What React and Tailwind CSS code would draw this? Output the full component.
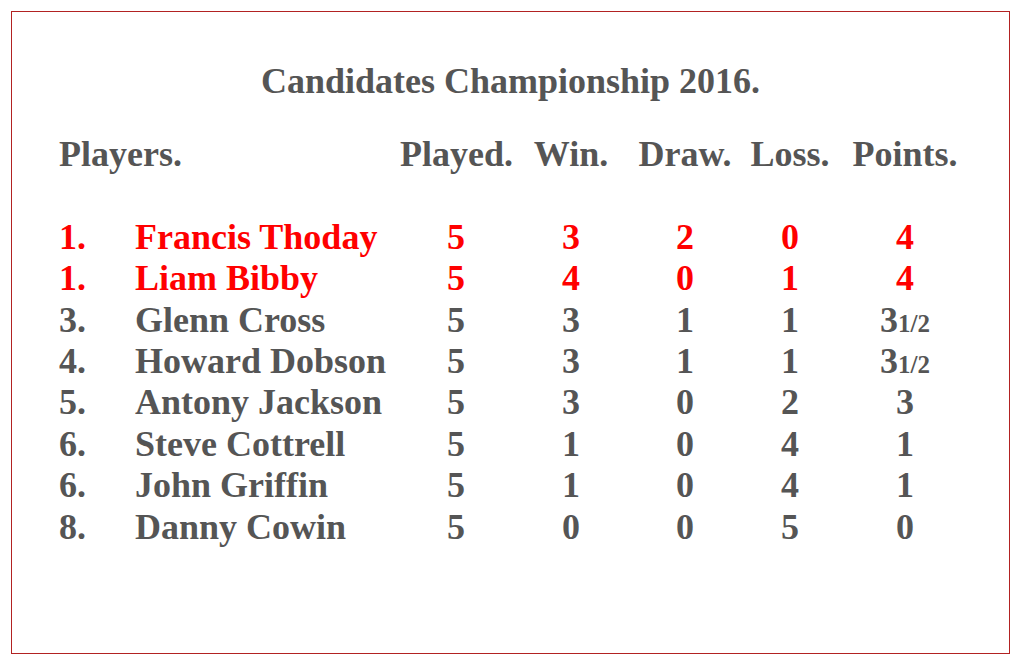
import React from "react";

const players = [
  { rank: "1.", name: "Francis Thoday", played: "5", win: "3", draw: "2", loss: "0", points: "4", lead: true },
  { rank: "1.", name: "Liam Bibby", played: "5", win: "4", draw: "0", loss: "1", points: "4", lead: true },
  { rank: "3.", name: "Glenn Cross", played: "5", win: "3", draw: "1", loss: "1", points: "3", half: true },
  { rank: "4.", name: "Howard Dobson", played: "5", win: "3", draw: "1", loss: "1", points: "3", half: true },
  { rank: "5.", name: "Antony Jackson", played: "5", win: "3", draw: "0", loss: "2", points: "3" },
  { rank: "6.", name: "Steve Cottrell", played: "5", win: "1", draw: "0", loss: "4", points: "1" },
  { rank: "6.", name: "John Griffin", played: "5", win: "1", draw: "0", loss: "4", points: "1" },
  { rank: "8.", name: "Danny Cowin", played: "5", win: "0", draw: "0", loss: "5", points: "0" },
];

const grid = "grid grid-cols-[76px_265px_112px_118px_110px_100px_130px]";

export default function App() {
  return (
    <div className="w-[1024px] h-[667px] bg-white pt-[11px] pl-[11px] font-[family-name:'Liberation_Serif','Times_New_Roman',serif] font-bold">
      <div className="w-[999px] h-[643px] border border-[#b22222] pl-[47px] text-[#555555]">
        {/* title */}
        <h1 className="pt-[49px] pr-[47px] text-center text-[36px] leading-[41.4px]">
          Candidates Championship 2016.
        </h1>

        {/* headers */}
        <div className={`${grid} mt-[32px] text-[36px] leading-[41.4px]`}>
          <div className="col-span-2">Players.</div>
          <div className="text-center">Played.</div>
          <div className="text-center">Win.</div>
          <div className="text-center">Draw.</div>
          <div className="text-center">Loss.</div>
          <div className="text-center">Points.</div>
        </div>

        {/* table rows */}
        <div className="mt-[41px] text-[36px] leading-[41.4px]">
          {players.map((p, i) => (
            <div key={i} className={`${grid} ${p.lead ? "text-[#ff0000]" : ""}`}>
              <div>{p.rank}</div>
              <div className="whitespace-nowrap">{p.name}</div>
              <div className="text-center">{p.played}</div>
              <div className="text-center">{p.win}</div>
              <div className="text-center">{p.draw}</div>
              <div className="text-center">{p.loss}</div>
              <div className="text-center">
                {p.points}
                {p.half && <span className="text-[25px] leading-none">1/2</span>}
              </div>
            </div>
          ))}
        </div>
      </div>
    </div>
  );
}
